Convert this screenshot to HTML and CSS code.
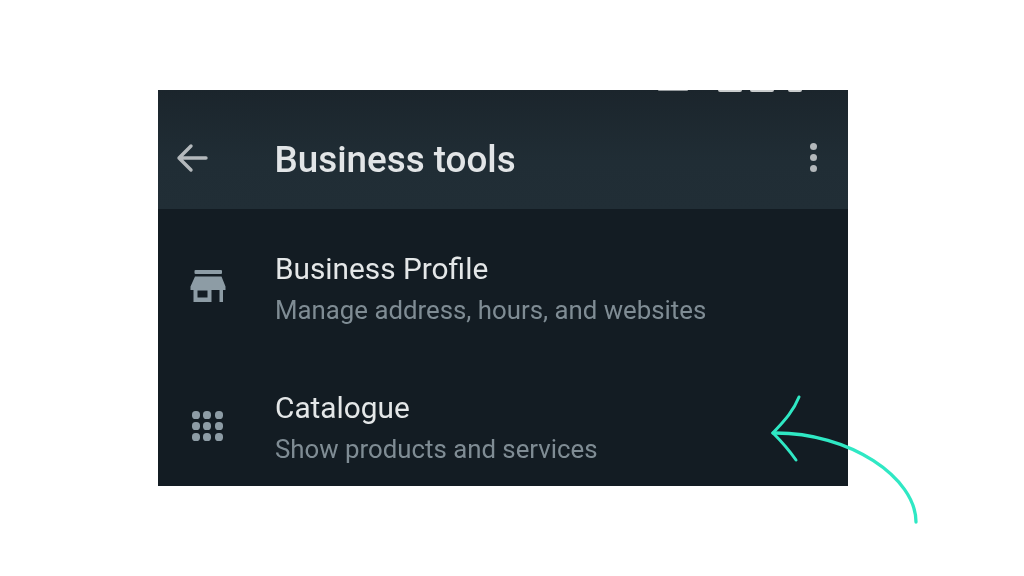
FILE: index.html
```html
<!DOCTYPE html>
<html lang="en">
<head>
<meta charset="utf-8">
<title>Business tools</title>
<link rel="stylesheet" href="styles.css">
</head>
<body>
<main class="panel">
  <div class="status-marks">
    <span class="mark mark-a"></span><span class="mark mark-b"></span><span class="mark mark-c"></span><span class="mark mark-d"></span>
  </div>
  <header class="app-bar">
    <svg class="back" viewBox="0 0 32 32" width="32" height="32" aria-hidden="true">
      <path d="M30 16H3M15 4 3 16l12 12" fill="none" stroke="#b4b9bc" stroke-width="3.400" stroke-linecap="round" stroke-linejoin="round"/>
    </svg>
    <h1 class="title">Business tools</h1>
    <div class="more" aria-hidden="true"><i></i><i></i><i></i></div>
  </header>
  <section class="list">
    <div class="row">
      <div class="row-icon">
        <svg viewBox="0 0 36 36" width="36" height="36" aria-hidden="true">
          <rect x="4.500" y="1" width="27.500" height="4" rx="1" fill="#8d9ca5"/>
          <path fill="#8d9ca5" fill-rule="evenodd" d="M5 7.500H31.500L35.500 17.500V21H33V33H29.500V21H21.500V33H3.500V21H.5V17.500ZM7.500 21.500V28.500H17.500V21.500Z"/>
        </svg>
      </div>
      <div class="row-text">
        <div class="row-title">Business Profile</div>
        <div class="row-sub">Manage address, hours, and websites</div>
      </div>
    </div>
    <div class="row">
      <div class="row-icon">
        <div class="dots"><i></i><i></i><i></i><i></i><i></i><i></i><i></i><i></i><i></i></div>
      </div>
      <div class="row-text">
        <div class="row-title">Catalogue</div>
        <div class="row-sub">Show products and services</div>
      </div>
    </div>
  </section>
</main>
<svg class="pointer" viewBox="0 0 1024 576" width="1024" height="576" aria-hidden="true">
  <g fill="none" stroke="#2fe8c4" stroke-linecap="round">
    <path stroke-width="3.300" d="M916 522C916 478 850 432 773 433"/>
    <path stroke-width="3" d="M799 397C793 412 783 422 773 433C782 442 789 450 796 460"/>
  </g>
</svg>
</body>
</html>
```
FILE: styles.css
```css
* { box-sizing: border-box; }
html, body { margin: 0; padding: 0; }
body {
  position: relative;
  width: 1024px;
  height: 576px;
  overflow: hidden;
  background: #fff;
  font-family: Roboto, "Liberation Sans", sans-serif;
}
.panel {
  position: relative;
  width: 690px;
  height: 396px;
  margin: 90px 0 0 157.500px;
  background: #131c23;
  overflow: hidden;
  filter: blur(.45px);
}
.app-bar {
  display: flex;
  align-items: center;
  height: 119px;
  padding: 16px 31px 0 18px;
  background: linear-gradient(#1b252c, #202d35 60%, #212e36);
}
.back { flex: none; margin-right: 67px; }
.title {
  flex: 1;
  margin: 4px 0 0;
  font-size: 36.800px;
  font-weight: 500;
  color: #e2e5e7;
}
.more { display: flex; flex-direction: column; gap: 4px; }
.more i { width: 7px; height: 7px; border-radius: 50%; background: #b3b8bb; }
.status-marks { position: absolute; top: 0; left: 500px; display: flex; }
.mark { height: 2px; background: #c9cccd; border-radius: 0 0 2px 2px; }
.mark-a { width: 30px; margin-right: 30px; height: 1px; opacity: .7; }
.mark-b { width: 24px; margin-right: 8px; }
.mark-c { width: 24px; margin-right: 14px; }
.mark-d { width: 14px; }
.list { display: flex; flex-direction: column; gap: 59px; padding-top: 38px; }
.row { display: flex; align-items: center; height: 80px; }
.row-icon {
  flex: none;
  width: 100px;
  height: 50px;
  padding-left: 32px;
  display: flex;
  align-items: center;
}
.dots {
  display: grid;
  grid-template-columns: repeat(3, 8px);
  gap: 3.300px;
  margin-left: 2.500px;
}
.dots i { height: 8px; border-radius: 45%; background: #8d9ca5; }
.row-text { margin-left: 17.500px; padding-top: 7px; }
.row-title { font-size: 29.800px; line-height: 40px; color: #e4e7e8; }
.row-sub { font-size: 25.800px; line-height: 43px; color: #7f8c94; }
.pointer { position: absolute; inset: 0; }
```
